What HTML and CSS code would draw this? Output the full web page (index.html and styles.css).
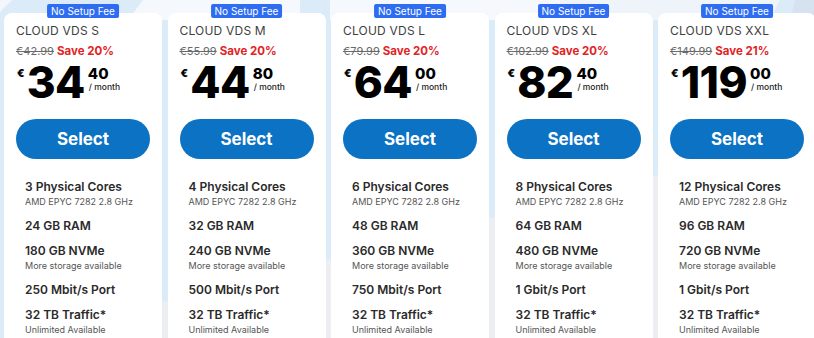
FILE: index.html
```html
<!DOCTYPE html>
<html lang="en">
<head>
<meta charset="utf-8">
<title>Cloud VDS</title>
<link rel="stylesheet" href="styles.css">
</head>
<body>
<div class="stage">
  <svg class="bg" width="814" height="338" viewBox="0 0 814 338" aria-hidden="true">
    <rect x="0" y="0" width="814" height="338" fill="#dcebf8"/>
    <polygon points="0,0 12,0 0,12" fill="#f3f7fb"/>
    <polygon points="143,0 300,0 300,20 128,20" fill="#f5f9fd"/>
    <polygon points="330,0 560,0 560,20 330,20" fill="#f5f9fd"/>
    <polygon points="560,0 780,0 770,20 560,20" fill="#eef4fa"/>
    <polygon points="795,0 814,0 814,40 785,40" fill="#d6e2ef"/>
    <polygon points="0,344 814,135 814,338 0,338" fill="#eceef2"/>
  </svg>
  <div class="plans">
    <div class="card">
      <span class="badge">No Setup Fee</span>
      <div class="title">CLOUD VDS S</div>
      <div class="old"><s>€42.99</s> <b>Save 20%</b></div>
      <div class="price"><span class="cur">€</span><span class="big">34</span><span class="tail"><span class="cents">40</span><span class="per">/ month</span></span></div>
      <button class="select">Select</button>
      <ul class="feats">
        <li><strong>3 Physical Cores</strong><small>AMD EPYC 7282 2.8 GHz</small></li>
        <li><strong>24 GB RAM</strong></li>
        <li><strong>180 GB NVMe</strong><small>More storage available</small></li>
        <li><strong>250 Mbit/s Port</strong></li>
        <li><strong>32 TB Traffic*</strong><small>Unlimited Available</small></li>
      </ul>
    </div>
    <div class="card">
      <span class="badge">No Setup Fee</span>
      <div class="title">CLOUD VDS M</div>
      <div class="old"><s>€55.99</s> <b>Save 20%</b></div>
      <div class="price"><span class="cur">€</span><span class="big">44</span><span class="tail"><span class="cents">80</span><span class="per">/ month</span></span></div>
      <button class="select">Select</button>
      <ul class="feats">
        <li><strong>4 Physical Cores</strong><small>AMD EPYC 7282 2.8 GHz</small></li>
        <li><strong>32 GB RAM</strong></li>
        <li><strong>240 GB NVMe</strong><small>More storage available</small></li>
        <li><strong>500 Mbit/s Port</strong></li>
        <li><strong>32 TB Traffic*</strong><small>Unlimited Available</small></li>
      </ul>
    </div>
    <div class="card">
      <span class="badge">No Setup Fee</span>
      <div class="title">CLOUD VDS L</div>
      <div class="old"><s>€79.99</s> <b>Save 20%</b></div>
      <div class="price"><span class="cur">€</span><span class="big">64</span><span class="tail"><span class="cents">00</span><span class="per">/ month</span></span></div>
      <button class="select">Select</button>
      <ul class="feats">
        <li><strong>6 Physical Cores</strong><small>AMD EPYC 7282 2.8 GHz</small></li>
        <li><strong>48 GB RAM</strong></li>
        <li><strong>360 GB NVMe</strong><small>More storage available</small></li>
        <li><strong>750 Mbit/s Port</strong></li>
        <li><strong>32 TB Traffic*</strong><small>Unlimited Available</small></li>
      </ul>
    </div>
    <div class="card">
      <span class="badge">No Setup Fee</span>
      <div class="title">CLOUD VDS XL</div>
      <div class="old"><s>€102.99</s> <b>Save 20%</b></div>
      <div class="price"><span class="cur">€</span><span class="big">82</span><span class="tail"><span class="cents">40</span><span class="per">/ month</span></span></div>
      <button class="select">Select</button>
      <ul class="feats">
        <li><strong>8 Physical Cores</strong><small>AMD EPYC 7282 2.8 GHz</small></li>
        <li><strong>64 GB RAM</strong></li>
        <li><strong>480 GB NVMe</strong><small>More storage available</small></li>
        <li><strong>1 Gbit/s Port</strong></li>
        <li><strong>32 TB Traffic*</strong><small>Unlimited Available</small></li>
      </ul>
    </div>
    <div class="card">
      <span class="badge">No Setup Fee</span>
      <div class="title">CLOUD VDS XXL</div>
      <div class="old"><s>€149.99</s> <b>Save 21%</b></div>
      <div class="price"><span class="cur">€</span><span class="big">119</span><span class="tail"><span class="cents">00</span><span class="per">/ month</span></span></div>
      <button class="select">Select</button>
      <ul class="feats">
        <li><strong>12 Physical Cores</strong><small>AMD EPYC 7282 2.8 GHz</small></li>
        <li><strong>96 GB RAM</strong></li>
        <li><strong>720 GB NVMe</strong><small>More storage available</small></li>
        <li><strong>1 Gbit/s Port</strong></li>
        <li><strong>32 TB Traffic*</strong><small>Unlimited Available</small></li>
      </ul>
    </div>
  </div>
</div>
</body>
</html>
```
FILE: styles.css
```css
* { box-sizing: border-box; }
html, body { margin: 0; padding: 0; }
body {
  font-family: Inter, "Noto Sans", Arial, sans-serif;
  background: #dcebf8;
  width: 814px;
  height: 338px;
  overflow: hidden;
}
.stage {
  position: relative;
  width: 814px;
  height: 338px;
  overflow: hidden;
}
.bg {
  position: absolute;
  left: 0;
  top: 0;
}
.plans {
  position: relative;
  display: flex;
  gap: 5.5px;
  padding: 13px 0 0 4px;
  width: 830px;
  height: 338px;
}
.card {
  position: relative;
  flex: 0 0 158px;
  background: #fff;
  border-radius: 8px 8px 0 0;
  padding: 10px 12px 0;
  height: 340px;
}
.badge {
  position: absolute;
  top: -9px;
  left: 50%;
  transform: translateX(-50%);
  background: #2e6cf1;
  color: #fff;
  font-size: 10px;
  line-height: 14px;
  padding: 0 4px;
  border-radius: 2px;
  white-space: nowrap;
}
.title {
  font-size: 12px;
  line-height: 16px;
  color: #3f3f3f;
  margin-bottom: 4px;
  letter-spacing: 0.2px;
}
.old {
  font-size: 11px;
  line-height: 16px;
  color: #6a6a6a;
}
.old s { color: #6a6a6a; }
.old b { color: #e2231f; font-weight: 700; font-size: 11.5px; }
.price {
  display: flex;
  align-items: flex-start;
  color: #000;
  margin-top: 1px;
}
.cur {
  font-size: 11px;
  line-height: 11px;
  font-weight: 800;
  margin-top: 7.5px;
  margin-left: 1px;
  margin-right: 2px;
}
.big {
  font-size: 44px;
  line-height: 44px;
  font-weight: 800;
  letter-spacing: -0.5px;
}
.tail {
  display: flex;
  flex-direction: column;
  margin-top: 6px;
  margin-left: 3px;
}
.cents {
  font-size: 15px;
  line-height: 15px;
  font-weight: 800;
}
.per {
  font-size: 8.5px;
  line-height: 12px;
  font-weight: 500;
  color: #222;
  margin-left: 1px;
}
.select {
  display: block;
  width: 134px;
  height: 40px;
  margin-top: 15px;
  border: 0;
  border-radius: 20px;
  background: #0b72c4;
  color: #fff;
  font-family: inherit;
  font-size: 17px;
  font-weight: 700;
  cursor: pointer;
}
.feats {
  list-style: none;
  margin: 20px 0 0;
  padding: 0 0 0 9px;
  display: flex;
  flex-direction: column;
  gap: 9.5px;
}
.feats li {
  display: flex;
  flex-direction: column;
}
.feats strong {
  font-size: 12px;
  line-height: 16px;
  font-weight: 600;
  color: #2a2a2a;
}
.feats small {
  font-size: 9px;
  line-height: 13px;
  color: #555;
}
```
